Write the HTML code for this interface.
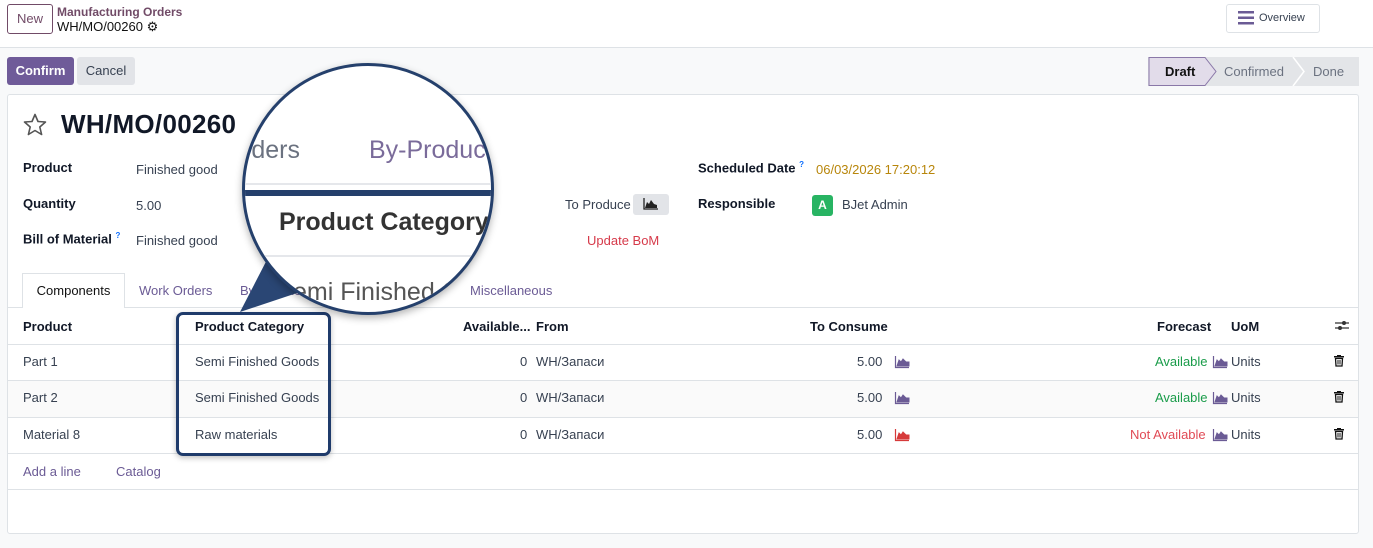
<!DOCTYPE html>
<html><head><meta charset="utf-8"><style>
*{box-sizing:border-box;margin:0;padding:0}
body{width:1373px;height:548px;overflow:hidden;background:#f8f9fa;font-family:"Liberation Sans",sans-serif;font-size:13px;color:#374151;position:relative}
.a{position:absolute;white-space:nowrap}
.b{font-weight:bold;color:#111827}
.top{position:absolute;left:0;top:0;width:1373px;height:48px;background:#fff;border-bottom:1px solid #dee2e6}
.hl{position:absolute;left:8px;height:1px;background:#dee2e6;width:1350px}
.purple{color:#714b67}
</style></head><body>
<div class="top"></div>
<div class="a" style="left:7px;top:4px;width:46px;height:30px;border:1px solid #714b67;border-radius:3px;color:#714b67;text-align:center;line-height:28px;font-size:13px">New</div>
<div class="a" style="left:57px;top:5px;font-size:12px;color:#714b67;font-weight:bold">Manufacturing Orders</div>
<div class="a" style="left:57px;top:19px;font-size:13px;color:#111">WH/MO/00260 <span style="font-size:13px">⚙</span></div>
<div class="a" style="left:1226px;top:4px;width:94px;height:29px;border:1px solid #dee2e6;border-radius:3px;background:#fff"></div>
<svg class="a" style="left:1238px;top:11px" width="16" height="14"><rect y="0" width="16" height="2.5" fill="#6b5b95"/><rect y="5.5" width="16" height="2.5" fill="#6b5b95"/><rect y="11" width="16" height="2.5" fill="#6b5b95"/></svg>
<div class="a" style="left:1259px;top:12px;font-size:11px;color:#374151">Overview</div>

<div class="a" style="left:7px;top:57px;width:67px;height:28px;border-radius:3px;color:#fff;font-weight:bold;text-align:center;line-height:28px;background:#6f5b99">Confirm</div>
<div class="a" style="left:77px;top:57px;width:58px;height:28px;background:#e2e4e8;border-radius:3px;color:#374151;text-align:center;line-height:28px">Cancel</div>
<svg class="a" style="left:1148px;top:57px" width="211" height="29">
<polygon points="0,0 220,0 220,29 0,29" fill="#e3e5e8"/>
<polygon points="1,0.5 57,0.5 68,14.5 57,28.5 1,28.5" fill="#e2dcea" stroke="#8a78a8"/>
<polyline points="145,0 156,14.5 145,29" fill="none" stroke="#fff" stroke-width="1.5"/>
<text x="17" y="19" font-family="Liberation Sans" font-size="13" font-weight="bold" fill="#111">Draft</text>
<text x="76" y="19" font-family="Liberation Sans" font-size="13" fill="#6b7280">Confirmed</text>
<text x="165" y="19" font-family="Liberation Sans" font-size="13" fill="#6b7280">Done</text>
</svg>

<div class="a" style="left:7px;top:94px;width:1352px;height:440px;background:#fff;border:1px solid #dee2e6;border-radius:3px"></div>
<svg class="a" style="left:23px;top:113px" width="24" height="23"><polygon points="12,1.5 15,8.5 22.5,9 16.8,14 18.6,21.5 12,17.5 5.4,21.5 7.2,14 1.5,9 9,8.5" fill="none" stroke="#555" stroke-width="1.6" stroke-linejoin="round"/></svg>
<div class="a b" style="left:61px;top:109px;font-size:26px;letter-spacing:0.3px">WH/MO/00260</div>
<div class="a b" style="left:23px;top:160px">Product</div>
<div class="a" style="left:136px;top:162px">Finished good</div>
<div class="a b" style="left:23px;top:196px">Quantity</div>
<div class="a" style="left:136px;top:198px">5.00</div>
<div class="a b" style="left:23px;top:231px">Bill of Material <sup style="color:#0d6efd;font-size:8px">?</sup></div>
<div class="a" style="left:136px;top:233px">Finished good</div>
<div class="a" style="left:565px;top:197px;color:#374151">To Produce</div>
<div class="a" style="left:633px;top:194px;width:36px;height:21px;background:#e2e4e8;border-radius:3px"></div>
<svg class="a" style="left:643px;top:198px" width="15" height="12"><path d="M1,0V11H15" stroke="#222" fill="none" stroke-width="1.3"/><path d="M2,10L4,4L6,6L8,2L11,6L14,7V10Z" fill="#222"/></svg>
<div class="a" style="left:587px;top:233px;color:#d63a4a">Update BoM</div>
<div class="a b" style="left:698px;top:160px">Scheduled Date <sup style="color:#0d6efd;font-size:8px">?</sup></div>
<div class="a" style="left:816px;top:162px;color:#b8860b">06/03/2026 17:20:12</div>
<div class="a b" style="left:698px;top:196px">Responsible</div>
<div class="a" style="left:812px;top:195px;width:21px;height:21px;background:#28b463;border-radius:3px;color:#fff;font-weight:bold;text-align:center;line-height:21px;font-size:12px">A</div>
<div class="a" style="left:842px;top:197px">BJet Admin</div>

<div class="hl" style="top:307px"></div>
<div class="a" style="left:22px;top:273px;width:103px;height:35px;background:#fff;border:1px solid #dee2e6;border-bottom:none;color:#111;text-align:center;line-height:34px">Components</div>
<div class="a" style="left:139px;top:283px;color:#6b5b95">Work Orders</div>
<div class="a" style="left:240px;top:283px;color:#6b5b95">By-Products</div>
<div class="a" style="left:470px;top:283px;color:#6b5b95">Miscellaneous</div>

<div class="a" style="left:8px;top:381px;width:1350px;height:36px;background:#fafafa"></div>
<div class="hl" style="top:344px"></div>
<div class="hl" style="top:380px"></div>
<div class="hl" style="top:417px"></div>
<div class="hl" style="top:453px"></div>
<div class="hl" style="top:489px"></div>
<div class="a b" style="left:23px;top:319px">Product</div>
<div class="a b" style="left:195px;top:319px">Product Category</div>
<div class="a b" style="left:463px;top:319px">Available...</div>
<div class="a b" style="left:536px;top:319px">From</div>
<div class="a b" style="left:810px;top:319px">To Consume</div>
<div class="a b" style="left:1157px;top:319px">Forecast</div>
<div class="a b" style="left:1231px;top:319px">UoM</div>
<svg class="a" style="left:1335px;top:319px" width="14" height="13"><path d="M0,4H14M0,9H14" stroke="#333" stroke-width="1.3"/><circle cx="9" cy="4" r="2" fill="#333"/><circle cx="5" cy="9" r="2" fill="#333"/></svg>

<div class="a" style="left:23px;top:354px">Part 1</div>
<div class="a" style="left:195px;top:354px">Semi Finished Goods</div>
<div class="a" style="left:520px;top:354px">0</div>
<div class="a" style="left:536px;top:354px">WH/Запаси</div>
<div class="a" style="left:857px;top:354px">5.00</div>
<div class="a" style="left:1155px;top:354px;color:#1a9c4a">Available</div>
<div class="a" style="left:1231px;top:354px">Units</div>

<div class="a" style="left:23px;top:390px">Part 2</div>
<div class="a" style="left:195px;top:390px">Semi Finished Goods</div>
<div class="a" style="left:520px;top:390px">0</div>
<div class="a" style="left:536px;top:390px">WH/Запаси</div>
<div class="a" style="left:857px;top:390px">5.00</div>
<div class="a" style="left:1155px;top:390px;color:#1a9c4a">Available</div>
<div class="a" style="left:1231px;top:390px">Units</div>

<div class="a" style="left:23px;top:427px">Material 8</div>
<div class="a" style="left:195px;top:427px">Raw materials</div>
<div class="a" style="left:520px;top:427px">0</div>
<div class="a" style="left:536px;top:427px">WH/Запаси</div>
<div class="a" style="left:857px;top:427px">5.00</div>
<div class="a" style="left:1130px;top:427px;color:#e04a55">Not Available</div>
<div class="a" style="left:1231px;top:427px">Units</div>

<svg class="a" style="left:0;top:0" width="1373" height="548">
<defs>
<g id="ch"><path d="M0.5,0V11.5H14" stroke-width="1.2" fill="none"/><path d="M2,10L4,4L6,6L8,3L11,6L14,6V10Z"/></g>
<g id="tr"><rect x="0" y="1" width="10" height="1.5"/><rect x="3" y="0" width="4" height="1.5"/><path d="M1.5,3.5H8.5L8,11H2Z" fill="none" stroke="#111" stroke-width="1.3"/><path d="M4,5V9.5M6,5V9.5" stroke="#111" stroke-width="1"/></g>
</defs>
<use href="#ch" x="895" y="356" fill="#6b5b95" stroke="#6b5b95"/>
<use href="#ch" x="895" y="392" fill="#6b5b95" stroke="#6b5b95"/>
<use href="#ch" x="895" y="429" fill="#d63a3a" stroke="#d63a3a"/>
<use href="#ch" x="1213" y="356" fill="#6b5b95" stroke="#6b5b95"/>
<use href="#ch" x="1213" y="392" fill="#6b5b95" stroke="#6b5b95"/>
<use href="#ch" x="1213" y="429" fill="#6b5b95" stroke="#6b5b95"/>
<use href="#tr" x="1334" y="355" fill="#111"/>
<use href="#tr" x="1334" y="391" fill="#111"/>
<use href="#tr" x="1334" y="428" fill="#111"/>
</svg>
<div class="a" style="left:23px;top:464px;color:#6b5b95">Add a line</div>
<div class="a" style="left:116px;top:464px;color:#6b5b95">Catalog</div>

<div class="a" style="left:176px;top:312px;width:155px;height:144px;border:3px solid #1f3b6b;border-radius:7px;box-shadow:0 2px 6px rgba(0,0,0,.25)"></div>
<svg class="a" style="left:230px;top:240px" width="80" height="80"><polygon points="10,72 42,10 70,52" fill="#2a4674"/></svg>
<div class="a" style="left:242px;top:63px;width:252px;height:252px;border-radius:50%;background:#fff;overflow:hidden;border:3px solid #25406c;box-shadow:0 3px 8px rgba(0,0,0,.3)">
 <div class="a" style="left:-2px;top:70px;font-size:25px;color:#6b7280">rders</div>
 <div class="a" style="left:124px;top:70px;font-size:25px;color:#7a6b9a">By-Produc</div>
 <div class="a" style="left:0;top:117px;width:252px;height:2px;background:#e5e7eb"></div>
 <div class="a" style="left:0;top:124px;width:252px;height:6px;background:#25406c"></div>
 <div class="a" style="left:34px;top:142px;font-size:25px;font-weight:bold;color:#333">Product Category</div>
 <div class="a" style="left:0;top:189px;width:252px;height:2px;background:#e5e7eb"></div>
 <div class="a" style="left:48px;top:212px;font-size:25px;color:#555">emi Finished G</div>
</div>
</body></html>
